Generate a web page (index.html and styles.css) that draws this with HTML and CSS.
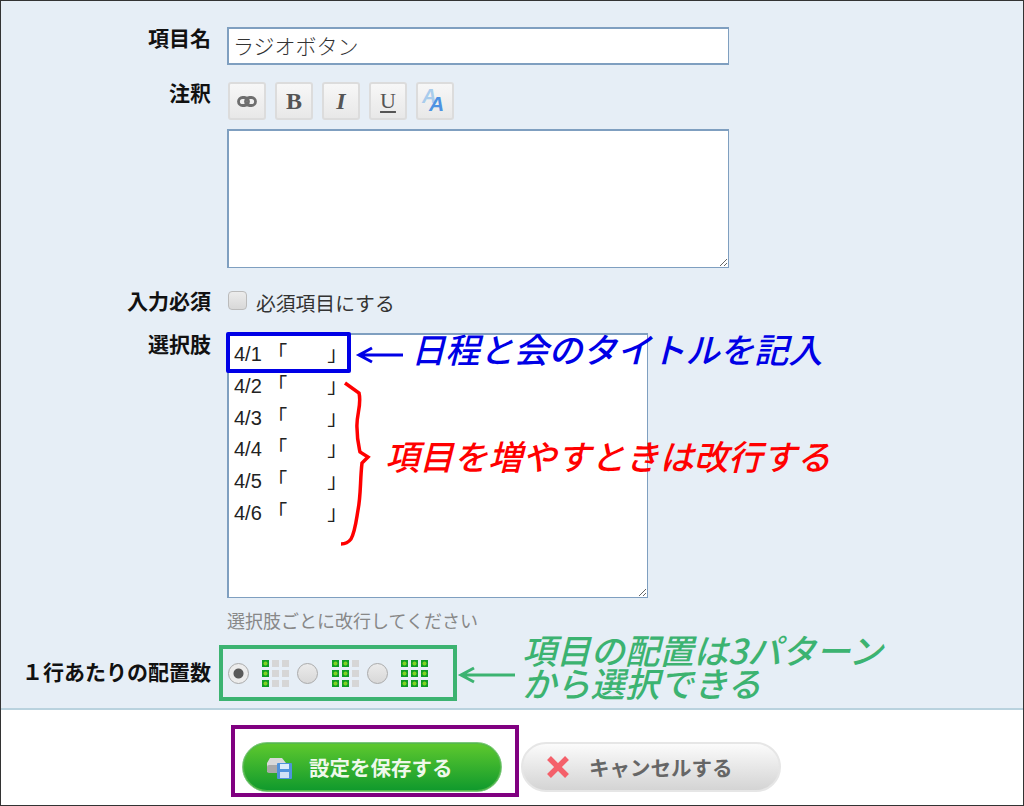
FILE: index.html
```html
<!DOCTYPE html>
<html lang="ja">
<head>
<meta charset="utf-8">
<title>ラジオボタン</title>
<link rel="stylesheet" href="styles.css">
</head>
<body>
<div class="frame">
  <main class="form">
    <div class="row row-name">
      <label class="label">項目名</label>
      <input class="text-input" type="text" value="ラジオボタン">
    </div>
    <div class="row row-note">
      <label class="label">注釈</label>
      <div class="field">
        <div class="toolbar">
          <button class="tool" type="button" aria-label="リンク">
            <svg width="20" height="11" viewBox="0 0 20 11"><rect x="1.5" y="1.5" width="10" height="8" rx="4" fill="none" stroke="#6e6e6e" stroke-width="2.8"/><rect x="8.5" y="1.5" width="10" height="8" rx="4" fill="none" stroke="#6e6e6e" stroke-width="2.8"/></svg>
          </button>
          <button class="tool tool-b" type="button">B</button>
          <button class="tool tool-i" type="button">I</button>
          <button class="tool tool-u" type="button">U</button>
          <button class="tool tool-a" type="button"><span class="a-back">A</span><span class="a-front">A</span></button>
        </div>
        <textarea class="note-area"></textarea>
      </div>
    </div>
    <div class="row row-required">
      <label class="label">入力必須</label>
      <label class="check"><input class="checkbox" type="checkbox"><span>必須項目にする</span></label>
    </div>
    <div class="row row-options">
      <label class="label">選択肢</label>
      <div class="field">
        <textarea class="options-area">4/1 「　　」
4/2 「　　」
4/3 「　　」
4/4 「　　」
4/5 「　　」
4/6 「　　」</textarea>
        <p class="hint">選択肢ごとに改行してください</p>
      </div>
    </div>
    <div class="row row-layout">
      <label class="label">１行あたりの配置数</label>
      <div class="layout-group">
        <input class="radio" type="radio" name="cols" checked>
        <span class="dots"><i class="on"></i><i></i><i></i><i class="on"></i><i></i><i></i><i class="on"></i><i></i><i></i></span>
        <input class="radio" type="radio" name="cols">
        <span class="dots"><i class="on"></i><i class="on"></i><i></i><i class="on"></i><i class="on"></i><i></i><i class="on"></i><i class="on"></i><i></i></span>
        <input class="radio" type="radio" name="cols">
        <span class="dots"><i class="on"></i><i class="on"></i><i class="on"></i><i class="on"></i><i class="on"></i><i class="on"></i><i class="on"></i><i class="on"></i><i class="on"></i></span>
      </div>
    </div>
  </main>
  <footer class="actions">
    <div class="save-highlight">
      <button class="btn btn-save" type="button">
        <svg class="btn-icon" width="27" height="24" viewBox="0 0 27 24">
          <path d="M4 3H16L20 8V17H1V8Z" fill="#d9d9d9"/>
          <rect x="1" y="10" width="19" height="8" rx="2" fill="#a9a9a9"/>
          <rect x="11" y="8" width="15" height="16" rx="1" fill="#4f93dc"/>
          <rect x="14" y="9" width="9" height="5" fill="#dcebf9"/>
          <rect x="14" y="17" width="9" height="6" fill="#cfe2f5"/>
        </svg>
        <span>設定を保存する</span>
      </button>
    </div>
    <button class="btn btn-cancel" type="button">
      <svg class="btn-icon" width="24" height="24" viewBox="0 0 24 24"><path d="M3 3L21 21M21 3L3 21" stroke="#f4606a" stroke-width="5.5" fill="none"/></svg>
      <span>キャンセルする</span>
    </button>
  </footer>

  <div class="blue-box"></div>
  <svg class="marks" width="1024" height="806" viewBox="0 0 1024 806">
    <path d="M403 355H360M372 348L359 355L372 362" fill="none" stroke="#0000e6" stroke-width="3"/>
    <path d="M345 383L359 393C362 405 356 415 357 428C357 440 359 447 360 452L368 457L362 463C360 480 361 495 358 510C356 522 355 532 351 539C348 543 345 544 341 544" fill="none" stroke="#f00" stroke-width="3.5"/>
    <path d="M515 675H462M474 668L461 675L474 682" fill="none" stroke="#3cb371" stroke-width="3"/>
  </svg>
  <p class="note note-blue">日程と会のタイトルを記入</p>
  <p class="note note-red">項目を増やすときは改行する</p>
  <p class="note note-green">項目の配置は3パターン<br>から選択できる</p>
</div>
</body>
</html>
```
FILE: styles.css
```css
* { box-sizing: border-box; }
html, body { margin: 0; padding: 0; }
body {
  font-family: "Liberation Sans", "Noto Sans CJK JP", sans-serif;
  color: #111;
  background: #fff;
}
.frame {
  position: relative;
  width: 1024px;
  height: 806px;
  border: 1px solid #333;
  display: flex;
  flex-direction: column;
  overflow: hidden;
}
.form {
  height: 709px;
  flex: none;
  padding-top: 26px;
  background: #e6eef6;
  border-bottom: 2px solid #b9d2de;
}
.row {
  display: grid;
  grid-template-columns: 210px 1fr;
  column-gap: 16px;
  align-items: start;
}
.label {
  text-align: right;
  font-weight: 700;
  font-size: 21px;
  line-height: 24px;
}
.row-note { margin-top: 17px; }
.row-required { margin-top: 22px; }
.row-options { margin-top: 19px; }
.row-layout { margin-top: 12px; align-items: center; }
.text-input {
  width: 502px;
  height: 38px;
  border: 1px solid #7f9fc0;
  border-width: 2px 1px 2px 2px;
  background: #fff;
  padding: 0 4px 3px;
  font-family: "Noto Sans CJK JP", sans-serif;
  font-weight: 300;
  font-size: 21px;
  color: #333;
  display: block;
}
.toolbar {
  display: flex;
  gap: 9px;
  margin-left: 1px;
}
.tool {
  width: 38px;
  height: 38px;
  padding: 0;
  border: 2px solid #dcdcdc;
  border-radius: 3px;
  background: linear-gradient(#f7f7f7, #e8e8e8);
  display: flex;
  align-items: center;
  justify-content: center;
  color: #555;
  font-family: "Liberation Serif", serif;
  font-size: 24px;
  line-height: 1;
}
.tool-b { font-weight: 700; }
.tool-i { font-weight: 700; font-style: italic; }
.tool-u { text-decoration: underline; text-underline-offset: 3px; font-size: 22px; }
.tool-a {
  position: relative;
  font-family: "Liberation Sans", sans-serif;
  font-style: italic;
  font-weight: 700;
}
.a-back { position: absolute; left: 4px; top: 2px; font-size: 20px; color: #a9ccec; }
.a-front { position: absolute; left: 11px; top: 9px; font-size: 21px; color: #4d92e2; }
.note-area {
  display: block;
  margin-top: 9px;
  width: 502px;
  height: 139px;
  border: 1px solid #7f9fc0;
  border-width: 2px 1px 1px 2px;
  background: #fff;
}
.check {
  display: flex;
  align-items: center;
  gap: 9px;
  font-size: 19.8px;
  color: #333;
  height: 24px;
}
.checkbox {
  appearance: none;
  width: 19px;
  height: 19px;
  margin: 0 0 4px 1px;
  border: 1px solid #bbb;
  border-radius: 4px;
  background: linear-gradient(#ececec, #d8d8d8);
}
.options-area {
  display: block;
  width: 421px;
  height: 265px;
  border: 1px solid #7f9fc0;
  border-width: 2px 1px 1px 2px;
  background: #fff;
  padding: 4px 5px;
  font-family: "Liberation Sans", "Noto Sans CJK JP", sans-serif;
  font-size: 20px;
  line-height: 31.8px;
  color: #222;
  overflow: hidden;
}
.hint {
  margin: 13px 0 0;
  font-size: 18px;
  line-height: 22px;
  color: #888;
}
.layout-group {
  margin-left: -8px;
  width: 238px;
  height: 56px;
  border: 4px solid #3cb371;
  display: flex;
  align-items: center;
  padding-left: 4.5px;
}
.radio {
  appearance: none;
  flex: none;
  width: 21px;
  height: 21px;
  margin: 0 13.5px 0 0;
  border: 1px solid #aaa;
  border-radius: 50%;
  background: linear-gradient(#ebebeb, #d8d8d8);
  position: relative;
  display: block;
}
.radio:checked {
  background: radial-gradient(circle, #5a5a5a 0 4.5px, #ececec 5.5px);
}
.dots {
  flex: none;
  display: grid;
  grid-template-columns: repeat(3, 7px);
  grid-auto-rows: 7px;
  gap: 3px;
  margin-right: 8px;
}
.dots i {
  background: #d6d6d6;
  display: block;
}
.dots i.on {
  background: radial-gradient(circle, #7ed321 0 1.6px, #0f9d24 2.4px);
}
.actions {
  flex: 1;
  display: flex;
  padding: 15px 0 0 230px;
  gap: 2px;
  align-items: flex-start;
}
.save-highlight {
  width: 288px;
  height: 72px;
  border: 4px solid #800080;
  padding: 13px 0 0 7px;
  flex: none;
}
.btn {
  width: 260px;
  height: 50px;
  border-radius: 25px;
  display: flex;
  align-items: center;
  font-family: "Liberation Sans", "Noto Sans CJK JP", sans-serif;
  font-weight: 700;
  font-size: 20.5px;
  padding: 0;
  flex: none;
}
.btn-save {
  border: 1px solid #7cc87c;
  background: linear-gradient(#5fc92e, #0f992d);
  color: #eef8ea;
  gap: 16px;
  padding-left: 23px;
  box-shadow: inset 0 0 0 1px #55b84a;
}
.btn-cancel {
  margin-top: 17px;
  border: 2px solid #e6e6e6;
  background: linear-gradient(#fbfbfb, #d4d4d4);
  color: #666;
  gap: 19px;
  padding-left: 23px;
}
.blue-box {
  position: absolute;
  left: 225px;
  top: 331px;
  width: 125px;
  height: 41px;
  border: 4px solid #0000e6;
  border-radius: 2px;
}
.marks {
  position: absolute;
  left: -1px;
  top: -1px;
  pointer-events: none;
}
.note {
  position: absolute;
  margin: 0;
  font-family: "Noto Sans CJK JP", sans-serif;
  font-style: italic;
  font-weight: 500;
  font-size: 34.3px;
  line-height: 33px;
  white-space: nowrap;
}
.note-blue { left: 410px; top: 331px; color: #0000e6; }
.note-red { left: 384px; top: 438px; color: #f00; }
.note-green { left: 521px; top: 632px; color: #3cb371; }
```
